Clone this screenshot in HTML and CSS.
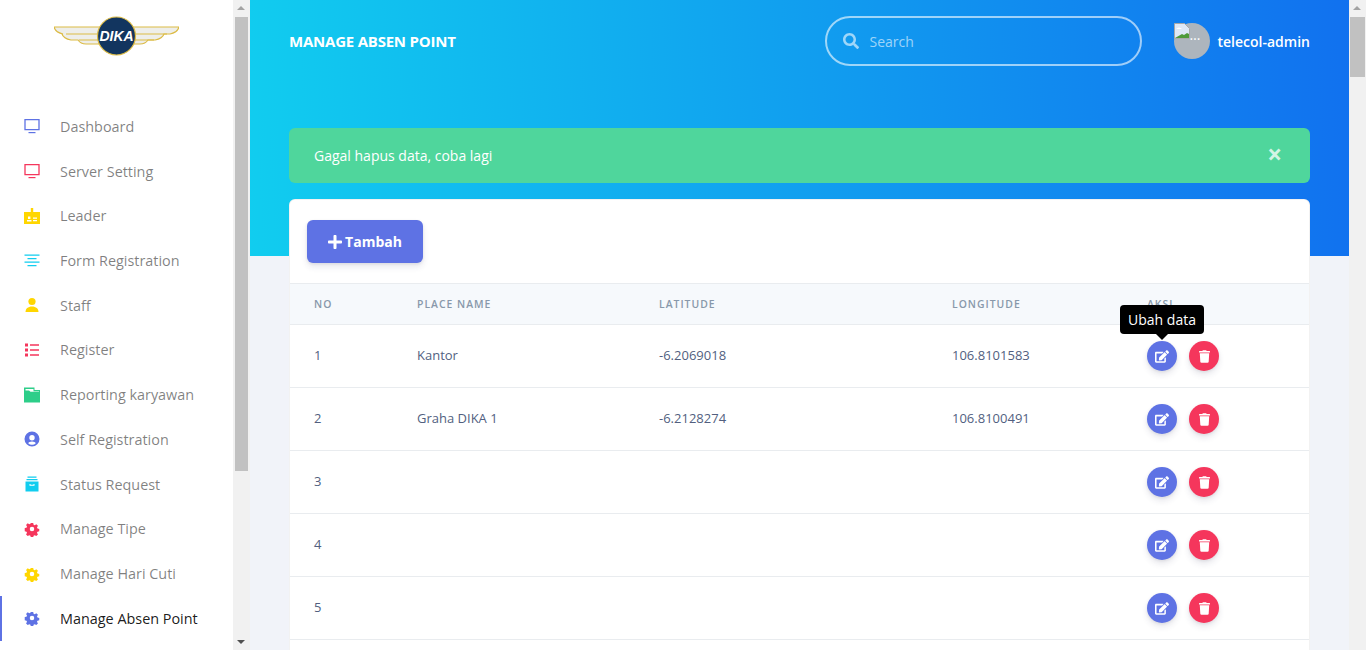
FILE: index.html
```html
<!DOCTYPE html>
<html lang="en">
<head>
    <meta charset="UTF-8">
    <meta name="viewport" content="width=device-width, initial-scale=1.0">
    <title>Manage Absen Point</title>
    <link rel="stylesheet" href="styles.css">
</head>
<body>
    <svg class="defs" width="0" height="0">
        <symbol id="gear" viewBox="0 0 16 16">
            <path fill="currentColor" d="M6.6 1h2.8l.4 2 1.3.6 1.8-1.1 1.9 1.9-1.1 1.8.6 1.3 2 .4v2.8l-2 .4-.6 1.3 1.1 1.8-1.9 1.9-1.8-1.1-1.3.6-.4 2H6.6l-.4-2-1.3-.6-1.8 1.1-1.9-1.9 1.1-1.8-.6-1.3-2-.4V6.9l2-.4.6-1.3-1.1-1.8 1.9-1.9 1.8 1.1 1.3-.6zM8 5.4a2.6 2.6 0 1 0 0 5.2 2.6 2.6 0 0 0 0-5.2z" fill-rule="evenodd" transform="translate(1 1) scale(.875)"/>
        </symbol>
        <symbol id="edit" viewBox="0 0 576 512">
            <path fill="currentColor" d="M402.6 83.2l90.2 90.2c3.8 3.8 3.8 10 0 13.8L274.4 405.6l-92.8 10.3c-12.4 1.4-22.9-9.1-21.5-21.5l10.3-92.8L388.8 83.2c3.8-3.8 10-3.8 13.8 0zm162-22.9l-48.8-48.8c-15.2-15.2-39.9-15.2-55.2 0l-35.4 35.4c-3.8 3.8-3.8 10 0 13.8l90.2 90.2c3.8 3.8 10 3.8 13.8 0l35.4-35.4c15.2-15.3 15.2-40 0-55.2zM384 346.2V448H64V128h229.8c3.2 0 6.2-1.3 8.5-3.5l40-40c7.6-7.6 2.2-20.5-8.5-20.5H48C21.5 64 0 85.5 0 112v352c0 26.5 21.5 48 48 48h352c26.5 0 48-21.5 48-48V306.2c0-10.7-12.9-16-20.5-8.5l-40 40c-2.2 2.3-3.5 5.3-3.5 8.5z"/>
        </symbol>
        <symbol id="trash" viewBox="0 0 448 512">
            <path fill="currentColor" d="M432 32H312l-9.4-18.7A24 24 0 0 0 281.1 0H166.8a23.72 23.72 0 0 0-21.4 13.3L136 32H16A16 16 0 0 0 0 48v32a16 16 0 0 0 16 16h416a16 16 0 0 0 16-16V48a16 16 0 0 0-16-16zM53.2 467a48 48 0 0 0 47.9 45h245.8a48 48 0 0 0 47.9-45L416 128H32z"/>
        </symbol>
    </svg>

    <div class="layout">
        <nav class="sidebar">
            <div class="logo">
                <svg width="125" height="40" viewBox="0 0 125 40">
                    <path d="M0 11h125c-1 4-4 6-9 7h-6c-1 3-4 5-9 6h-7c-2 3-4 4-8 4H32c-4 0-6-1-8-4h-7c-5-1-8-3-9-6H9c-5-1-8-3-9-7z" fill="#eeeeea" stroke="#dcbb45" stroke-width="1.2"/>
                    <path d="M12 18h101M25 24h75" stroke="#dcbb45" stroke-width="1.2" fill="none"/>
                    <circle cx="62.5" cy="20" r="19" fill="#12355f" stroke="#dcbb45" stroke-width="1.2"/>
                    <text x="62.5" y="25" text-anchor="middle" class="logo-text">DIKA</text>
                </svg>
            </div>
            <ul class="nav">
                <li class="nav-item">
                    <svg class="nav-icon c-blue" viewBox="0 0 16 16"><path fill="none" stroke="currentColor" stroke-width="1.3" d="M1 1.6h14v10H1z"/><path fill="currentColor" d="M4.5 14h7v1.2h-7z"/></svg>
                    Dashboard
                </li>
                <li class="nav-item">
                    <svg class="nav-icon c-red" viewBox="0 0 16 16"><path fill="none" stroke="currentColor" stroke-width="1.3" d="M1 1.6h14v10H1z"/><path fill="currentColor" d="M4.5 14h7v1.2h-7z"/></svg>
                    Server Setting
                </li>
                <li class="nav-item">
                    <svg class="nav-icon c-yellow" viewBox="0 0 16 16"><path fill="currentColor" fill-rule="evenodd" d="M6.8 0h2.400v4H16V16H0V4h6.800zM3 12h4.500v1.500H3zM9 9.500h4v1.200H9zM9 12h4v1.200H9zM4 8.500h2.400v2.500H4z"/></svg>
                    Leader
                </li>
                <li class="nav-item">
                    <svg class="nav-icon c-cyan" viewBox="0 0 16 16"><path fill="currentColor" d="M.5 1.5h15v1.300H.5zM3.500 5h9v1.300h-9zM.5 8.500h15v1.300H.5zM3.500 12h9v1.300h-9z"/></svg>
                    Form Registration
                </li>
                <li class="nav-item">
                    <svg class="nav-icon c-yellow" viewBox="0 0 16 16"><circle cx="8" cy="4.500" r="3.600" fill="currentColor"/><path fill="currentColor" d="M1.500 15c0-3.400 2.400-5.600 6.500-5.600s6.500 2.200 6.500 5.600z"/></svg>
                    Staff
                </li>
                <li class="nav-item">
                    <svg class="nav-icon c-red" viewBox="0 0 16 16"><path fill="currentColor" d="M1 1.500h3v3H1zM1 6.500h3v3H1zM1 11.500h3v3H1zM6 2.300h9v1.500H6zM6 7.300h9v1.500H6zM6 12.300h9v1.500H6z"/></svg>
                    Register
                </li>
                <li class="nav-item">
                    <svg class="nav-icon c-green" viewBox="0 0 16 16"><path fill="currentColor" d="M0 .5h10.500V3H16v12.500H0zM1.500 2v1.500H5l1.500 1.200H15V4.300H9.500V2z"/></svg>
                    Reporting karyawan
                </li>
                <li class="nav-item">
                    <svg class="nav-icon c-blue" viewBox="0 0 16 16"><path fill="currentColor" fill-rule="evenodd" d="M8 .5a7.500 7.500 0 1 0 0 15 7.500 7.500 0 0 0 0-15zM8 4a2.700 2.700 0 1 1 0 5.400A2.700 2.700 0 0 1 8 4zm0 6.500c2 0 3.300.7 3.800 1.800A5.400 5.400 0 0 1 8 13.800a5.400 5.400 0 0 1-3.800-1.500c.5-1.100 1.800-1.800 3.800-1.800z"/></svg>
                    Self Registration
                </li>
                <li class="nav-item">
                    <svg class="nav-icon c-cyan" viewBox="0 0 16 16"><path fill="currentColor" fill-rule="evenodd" d="M3.500.5h9v1.300h-9zM2.500 3h11v1.300h-11zM1.500 5.500h13v10h-13zM5.500 8v1.800h5V8H9.500v.7h-3V8z"/></svg>
                    Status Request
                </li>
                <li class="nav-item">
                    <svg class="nav-icon c-red"><use href="#gear"/></svg>
                    Manage Tipe
                </li>
                <li class="nav-item">
                    <svg class="nav-icon c-yellow"><use href="#gear"/></svg>
                    Manage Hari Cuti
                </li>
                <li class="nav-item active">
                    <svg class="nav-icon c-blue"><use href="#gear"/></svg>
                    Manage Absen Point
                </li>
            </ul>
        </nav>

        <div class="scrollbar">
            <span class="arrow-up"></span>
            <span class="thumb thumb-side"></span>
            <span class="arrow-down"></span>
        </div>

        <main class="main">
            <header class="hero">
                <div class="topbar">
                    <span class="page-title">Manage Absen Point</span>
                    <div class="search">
                        <svg class="search-icon" viewBox="0 0 512 512"><path fill="currentColor" d="M505 442.700L405.300 343c-4.500-4.500-10.600-7-17-7H372c27.600-35.300 44-79.700 44-128C416 93.100 322.900 0 208 0S0 93.100 0 208s93.100 208 208 208c48.300 0 92.700-16.400 128-44v16.300c0 6.400 2.500 12.500 7 17l99.700 99.700c9.400 9.400 24.600 9.400 33.900 0l28.300-28.300c9.400-9.400 9.400-24.600.1-34zM208 336c-70.700 0-128-57.200-128-128 0-70.700 57.200-128 128-128 70.700 0 128 57.200 128 128 0 70.700-57.200 128-128 128z"/></svg>
                        <span>Search</span>
                    </div>
                    <div class="user">
                        <span class="avatar">
                            <svg class="broken" width="16" height="16" viewBox="0 0 16 16">
                                <path d="M.5.500h10l5 5v10H.5z" fill="#dfe8f6" stroke="#a8a8a8"/>
                                <path d="M1 15l7-4 2 1 3-2 2 1v4z" fill="#4f9a3a"/>
                                <path d="M2 6c2-2 4-2 6 0z" fill="#fff"/>
                            </svg>
                            <span class="broken-alt">…</span>
                        </span>
                        <span class="user-name">telecol-admin</span>
                    </div>
                </div>
            </header>

            <div class="content">
                <div class="alert">
                    <span>Gagal hapus data, coba lagi</span>
                    <span class="alert-close">×</span>
                </div>

                <section class="card">
                    <div class="card-head">
                        <button class="btn-add" type="button">
                            <svg width="14" height="16" viewBox="0 0 448 512"><path fill="currentColor" d="M416 208H272V64c0-17.670-14.330-32-32-32h-32c-17.670 0-32 14.330-32 32v144H32c-17.670 0-32 14.330-32 32v32c0 17.670 14.330 32 32 32h144v144c0 17.670 14.330 32 32 32h32c17.670 0 32-14.330 32-32V304h144c17.670 0 32-14.330 32-32v-32c0-17.670-14.330-32-32-32z"/></svg>
                            Tambah
                        </button>
                    </div>
                    <table class="data-table">
                        <thead>
                            <tr>
                                <th class="col-no">No</th>
                                <th class="col-place">Place Name</th>
                                <th class="col-lat">Latitude</th>
                                <th class="col-long">Longitude</th>
                                <th>Aksi</th>
                            </tr>
                        </thead>
                        <tbody>
                            <tr>
                                <td>1</td>
                                <td>Kantor</td>
                                <td>-6.2069018</td>
                                <td>106.8101583</td>
                                <td>
                                    <div class="actions">
                                        <span class="btn-round blue">
                                            <svg class="icon-edit"><use href="#edit"/></svg>
                                            <span class="tooltip">Ubah data</span>
                                        </span>
                                        <span class="btn-round red"><svg class="icon-trash"><use href="#trash"/></svg></span>
                                    </div>
                                </td>
                            </tr>
                            <tr>
                                <td>2</td>
                                <td>Graha DIKA 1</td>
                                <td>-6.2128274</td>
                                <td>106.8100491</td>
                                <td>
                                    <div class="actions">
                                        <span class="btn-round blue"><svg class="icon-edit"><use href="#edit"/></svg></span>
                                        <span class="btn-round red"><svg class="icon-trash"><use href="#trash"/></svg></span>
                                    </div>
                                </td>
                            </tr>
                            <tr>
                                <td>3</td>
                                <td></td>
                                <td></td>
                                <td></td>
                                <td>
                                    <div class="actions">
                                        <span class="btn-round blue"><svg class="icon-edit"><use href="#edit"/></svg></span>
                                        <span class="btn-round red"><svg class="icon-trash"><use href="#trash"/></svg></span>
                                    </div>
                                </td>
                            </tr>
                            <tr>
                                <td>4</td>
                                <td></td>
                                <td></td>
                                <td></td>
                                <td>
                                    <div class="actions">
                                        <span class="btn-round blue"><svg class="icon-edit"><use href="#edit"/></svg></span>
                                        <span class="btn-round red"><svg class="icon-trash"><use href="#trash"/></svg></span>
                                    </div>
                                </td>
                            </tr>
                            <tr>
                                <td>5</td>
                                <td></td>
                                <td></td>
                                <td></td>
                                <td>
                                    <div class="actions">
                                        <span class="btn-round blue"><svg class="icon-edit"><use href="#edit"/></svg></span>
                                        <span class="btn-round red"><svg class="icon-trash"><use href="#trash"/></svg></span>
                                    </div>
                                </td>
                            </tr>
                        </tbody>
                    </table>
                </section>
            </div>
        </main>

        <div class="scrollbar">
            <span class="arrow-up"></span>
            <span class="thumb thumb-page"></span>
        </div>
    </div>
</body>
</html>
```

FILE: styles.css
```css
* {
    box-sizing: border-box;
}

html, body {
    height: 650px;
    margin: 0;
    overflow: hidden;
}

body {
    font-family: "Open Sans", sans-serif;
    background-color: #f1f3f9;
    color: #525f7f;
}

.defs {
    display: block;
    height: 0;
}

.layout {
    display: flex;
    height: 650px;
}

/* sidebar */
.sidebar {
    width: 233px;
    flex-shrink: 0;
    background-color: #ffffff;
    overflow: hidden;
}

.logo {
    display: flex;
    justify-content: center;
    padding: 16px 0 0;
    height: 104px;
}

.logo-text {
    font-family: "Liberation Sans", sans-serif;
    font-size: 14px;
    font-weight: bold;
    font-style: italic;
    fill: #ffffff;
}

.nav {
    list-style: none;
    margin: 0;
    padding: 0;
}

.nav-item {
    display: flex;
    align-items: center;
    height: 44.73px;
    padding-left: 24px;
    font-size: 14.4px;
    color: rgba(0, 0, 0, 0.5);
}

.nav-item.active {
    color: rgba(0, 0, 0, 0.9);
    box-shadow: inset 2px 0 0 #5e72e4;
}

.nav-icon {
    width: 16px;
    height: 16px;
    margin-right: 20px;
    flex-shrink: 0;
}

.c-blue { color: #5e72e4; }
.c-red { color: #f5365c; }
.c-yellow { color: #ffd600; }
.c-cyan { color: #11cdef; }
.c-green { color: #2dce89; }

/* fake browser scrollbars */
.scrollbar {
    position: relative;
    width: 17px;
    flex-shrink: 0;
    background-color: #f1f1f1;
}

.thumb {
    position: absolute;
    left: 2px;
    width: 13px;
    top: 17px;
    background-color: #c1c1c1;
}

.thumb-side {
    height: 454px;
}

.thumb-page {
    left: 1px;
    width: 15px;
    height: 60px;
}

.arrow-up, .arrow-down {
    position: absolute;
    left: 4px;
    width: 0;
    height: 0;
    border-left: 4px solid transparent;
    border-right: 4px solid transparent;
}

.arrow-up {
    top: 6px;
    border-bottom: 4px solid #a3a3a3;
}

.arrow-down {
    bottom: 6px;
    border-top: 4px solid #505050;
}

/* main */
.main {
    flex: 1;
    min-width: 0;
}

.hero {
    height: 256px;
    padding: 16px 39px 0;
    background: linear-gradient(87deg, #11cdef 0, #1171ef 100%);
}

.topbar {
    display: flex;
    align-items: center;
    height: 50px;
}

.page-title {
    font-size: 15px;
    font-weight: 700;
    letter-spacing: -0.22px;
    text-transform: uppercase;
    color: #ffffff;
}

.search {
    display: flex;
    align-items: center;
    gap: 11px;
    width: 317px;
    height: 50px;
    margin-left: auto;
    padding: 0 16px;
    border: 2px solid rgba(255, 255, 255, 0.6);
    border-radius: 25px;
    font-size: 14px;
    color: rgba(255, 255, 255, 0.6);
}

.search-icon {
    width: 16px;
    height: 16px;
}

.user {
    display: flex;
    align-items: center;
    gap: 8px;
    margin-left: 32px;
}

.avatar {
    position: relative;
    width: 36px;
    height: 36px;
    border-radius: 50%;
    background-color: #adb5bd;
}

.broken {
    position: absolute;
    left: 0;
    top: 0;
}

.broken-alt {
    position: absolute;
    left: 16px;
    top: 2px;
    font-size: 14px;
    line-height: 20px;
    color: #ffffff;
}

.user-name {
    font-size: 14px;
    font-weight: 600;
    color: #ffffff;
}

.content {
    margin-top: -128px;
    padding: 0 39px;
}

.alert {
    display: flex;
    justify-content: space-between;
    align-items: center;
    height: 55px;
    padding: 0 25px;
    margin-bottom: 16px;
    background-color: #4fd69c;
    border-radius: 6px;
    font-size: 14px;
    color: #ffffff;
}

.alert-close {
    font-size: 26px;
    font-weight: 700;
    line-height: 30px;
    color: rgba(255, 255, 255, 0.75);
    margin-right: 3px;
    padding-bottom: 3px;
}

.card {
    background-color: #ffffff;
    border: 1px solid rgba(0, 0, 0, 0.05);
    border-radius: 6px;
    padding-bottom: 40px;
}

.card-head {
    padding: 20px 17px;
}

.btn-add {
    display: flex;
    align-items: center;
    justify-content: center;
    gap: 3px;
    width: 116px;
    height: 43px;
    border: none;
    border-radius: 6px;
    background-color: #5e72e4;
    color: #ffffff;
    font-family: inherit;
    font-size: 14px;
    font-weight: 700;
    box-shadow: 0 4px 6px rgba(50, 50, 93, 0.11), 0 1px 3px rgba(0, 0, 0, 0.08);
}

.data-table {
    width: 100%;
    table-layout: fixed;
    border-collapse: collapse;
}

.data-table th {
    height: 41px;
    padding: 0 24px 1px;
    background-color: #f6f9fc;
    border-top: 1px solid #e9ecef;
    border-bottom: 1px solid #e9ecef;
    font-size: 10.4px;
    font-weight: 600;
    letter-spacing: 1px;
    text-align: left;
    text-transform: uppercase;
    color: #8898aa;
}

.col-no { width: 103px; }
.col-place { width: 242px; }
.col-lat { width: 293px; }
.col-long { width: 195px; }

.data-table td {
    height: 63px;
    padding: 0 24px 2px;
    border-bottom: 1px solid #e9ecef;
    font-size: 13px;
}

.actions {
    display: flex;
    gap: 12px;
    margin-top: 2px;
}

.btn-round {
    position: relative;
    display: flex;
    align-items: center;
    justify-content: center;
    width: 30px;
    height: 30px;
    border-radius: 50%;
    color: #ffffff;
    box-shadow: 0 4px 6px rgba(50, 50, 93, 0.11), 0 1px 3px rgba(0, 0, 0, 0.08);
}

.btn-round.blue { background-color: #5e72e4; }
.btn-round.red { background-color: #f5365c; }

.icon-edit {
    width: 14px;
    height: 13px;
}

.icon-trash {
    width: 11px;
    height: 13px;
}

.tooltip {
    position: absolute;
    left: -27px;
    bottom: 37px;
    width: 84px;
    height: 29px;
    border-radius: 4px;
    background-color: #000000;
    color: #ffffff;
    font-size: 14px;
    line-height: 29px;
    text-align: center;
}

.tooltip::after {
    content: "";
    position: absolute;
    left: 36px;
    top: 100%;
    border-left: 6px solid transparent;
    border-right: 6px solid transparent;
    border-top: 6px solid #000000;
}
```
